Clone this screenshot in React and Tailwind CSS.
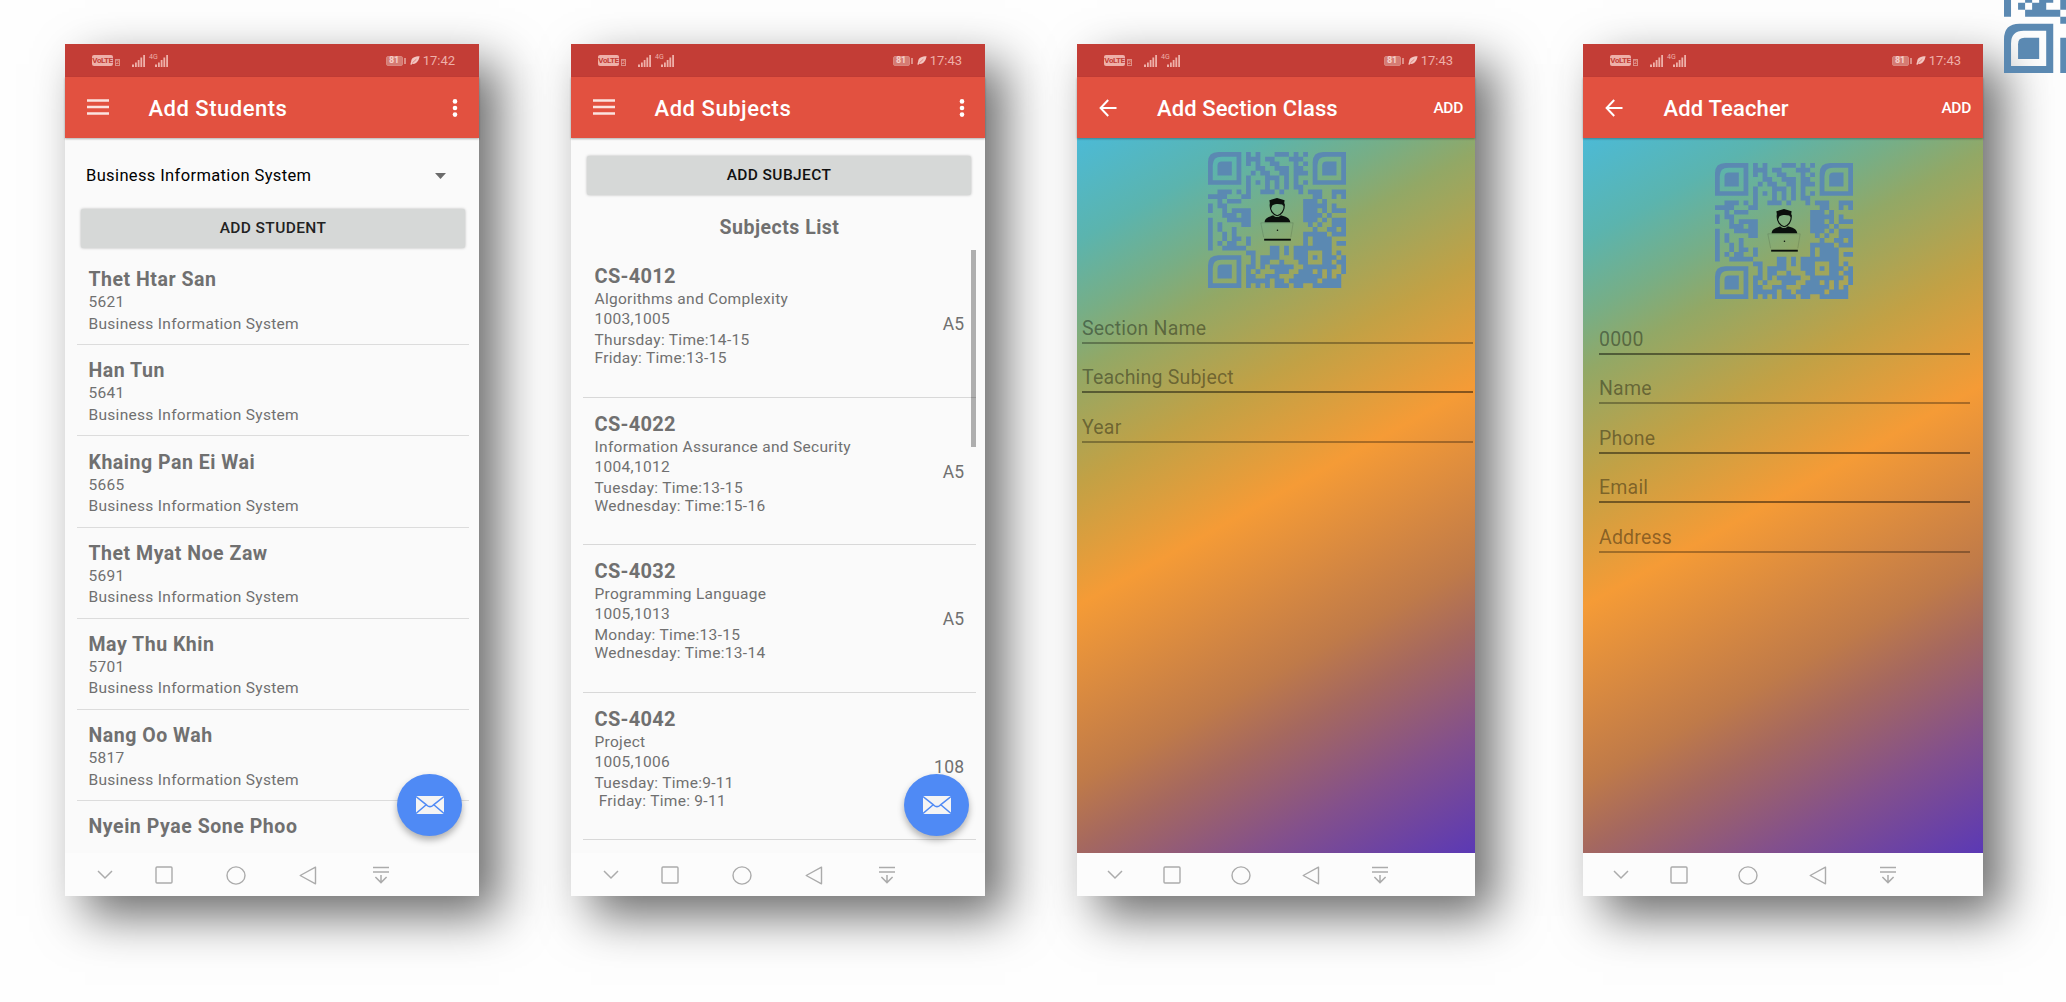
import React from "react";

/* Dark modules of each code row, as column numbers and ranges (finders are drawn apart). */
const MODULES = [
  "8 10 14-16 18 20",
  "8-10 12-13 17-19",
  "8 10 13-14 18 20",
  "10 11 14-16 18-19",
  "9 11-12 15-16 18-20",
  "8 12-14 16 18",
  "8 10 12 14 16 18 20",
  "8 12 14 16 18-19",
  "2-4 6 8 11-13 15 19 21-23 26-28",
  "0-3 7-8 22-23 26 28",
  "2 4-6 20-22 24",
  "0 2-3 20-24 26",
  "0 3 5-8 20-22 24 26-28",
  "3-5 7-8 20-23 25",
  "0 4-8 20-22 24 26-28",
  "0 2 7-8 21 23 26-28",
  "0 2 5 22 25-26 28",
  "0 3 5 20-24 26-28",
  "0 3 5-6 8 20 22-25",
  "0 2 4-5 8 20 22-25 27-28",
  "0 3-7 13-14 16 18-25",
  "8-9 13-14 16 18-20 24-25 27",
  "9 11-14 18-20 22 24-26 28",
  "9 11-12 15 19-20 24-25 27-28",
  "8-9 11 13-17 20-26 28",
  "8 10 14-16 19-21 23 25 28",
  "8-9 12-14 18-23 25 27",
  "8-12 14-15 17-22 24-27",
  "8 10 12 14-16 18-19 22-27",
];

const MODULE_PATH = MODULES.map((row, y) =>
  row
    .split(" ")
    .map((run) => {
      const [a, b = a] = run.split("-").map(Number);
      const w = b - a + 1;
      return `M${a} ${y}h${w}v1h${-w}z`;
    })
    .join("")
).join("");

function Finder({ x, y }) {
  return (
    <g transform={`translate(${x} ${y})`}>
      <path fillRule="evenodd" d="M2.2 0H7V7H0V2.2Q0 0 2.2 0ZM2.8 1Q1 1 1 2.8V6H6V1Z" />
      <path d="M2.9 2H5V5H2V2.9Q2 2 2.9 2Z" />
    </g>
  );
}

function QrCode({ className, person }) {
  return (
    <svg viewBox="0 0 29 29" preserveAspectRatio="none" className={className} fill="#5b89b2">
      <path d={MODULE_PATH} />
      <Finder x={0} y={0} />
      <Finder x={22} y={0} />
      <Finder x={0} y={22} />
      {person && (
        <g>
          <path fill="#0a0f0c" d="M12.9 10.3L14.5 9.8L16.1 10.3L15.9 11.6L15.6 11.2C14.8 11 14.2 11 13.5 11.4L13.2 12.2Z" />
          <path fill="#0a0f0c" d="M11.9 15C11.9 14 13 13.8 13.7 13.5C14 14 15 14 15.3 13.5C16.2 13.8 17.2 14 17.3 15Z" />
          <path fill="none" stroke="#0a0f0c" strokeWidth=".24" d="M13.1 11C12.9 12.6 13.8 13.4 14.55 13.6C15.3 13.4 16.2 12.6 16 11" />
          <path fill="none" stroke="#0a0f0c" strokeOpacity=".35" strokeWidth=".08" d="M11.7 18.2L11.1 15.1H17.9L17.4 18.2" />
          <circle cx="14.6" cy="16.7" r=".16" fill="#0a0f0c" />
          <path fill="#0a0f0c" d="M11.8 18.5H17.4V18.9H11.8Z" />
        </g>
      )}
    </svg>
  );
}

function Signal() {
  return (
    <svg viewBox="0 0 14 12" className="h-3 w-3.5" fill="#eeb0a9">
      <path d="M0 9.5h2v2.5H0zM3 7.5h1.8V12H3zM5.7 5h1.8v7H5.7zM8.4 2.5h1.8V12H8.4zM11.2 0H13v12h-1.8z" />
    </svg>
  );
}

function StatusBar({ time, right }) {
  return (
    <div className="flex h-[33px] shrink-0 items-center bg-[#c33d36] pl-[27px] text-[#eeb0a9]">
      <span className="flex h-[11px] w-[21px] items-center justify-center rounded-[2px] bg-[#eeb0a9] text-[8px] font-bold leading-none tracking-[-0.4px] text-[#c33d36]">
        VoLTE
      </span>
      <span className="ml-[2px] mt-[3px] flex h-[7px] w-[5px] items-center justify-center border border-[#dd8f87] text-[6px] leading-none">
        2
      </span>
      <span className="ml-[12px]">
        <Signal />
      </span>
      <span className="-mr-[3px] ml-[3px] self-start pt-[10px] text-[7px] leading-none">4G</span>
      <Signal />
      <div className={"ml-auto flex items-center " + right}>
        <span className="flex h-[10px] w-[17px] items-center justify-center rounded-[2px] border border-[#d9867e] bg-[#d57b73] text-[9px] font-bold leading-none text-[#f6d0cb]">
          81
        </span>
        <span className="ml-px h-[6px] w-[2px] bg-[#dd8f87]" />
        <svg viewBox="0 0 10 9" className="ml-[4px] h-[9px] w-[10px]">
          <path fill="#f3c5c0" d="M9.6.2C5 .2 1.4 1.6 1.2 5.2L.3 8.4L1.6 8.8L2.2 7.8C6.4 8.6 8.8 4.6 9.6.2Z" />
          <path stroke="#c33d36" strokeWidth=".5" fill="none" d="M2.4 6.8L6.4 3.2" />
        </svg>
        <span className="ml-[3px] text-[13px] leading-none">{time}</span>
      </div>
    </div>
  );
}

function AppBar({ title, back, titleClass, rightClass }) {
  return (
    <div className="relative z-10 flex h-[61px] shrink-0 items-center bg-[#e25140] pt-px text-white shadow-[0_1px_2px_rgba(0,0,0,0.3)]">
      {back ? (
        <svg viewBox="0 0 18 18" className="ml-[22px] h-[18px] w-[18px]" fill="none" stroke="white" strokeWidth="2">
          <path d="M17.5 9H2M9.2 1L1.6 9L9.2 17" />
        </svg>
      ) : (
        <svg viewBox="0 0 22 16" className="mb-[2px] ml-[21.5px] h-4 w-[22px]" fill="#fbe3e0">
          <path d="M0 .3h22v2.5H0zM0 6.8h22v2.5H0zM0 13.2h22v2.5H0z" />
        </svg>
      )}
      <h1 className={"pt-[2px] text-[22px] font-medium leading-none " + titleClass}>{title}</h1>
      <div className={"ml-auto " + rightClass}>
        {back ? (
          <span className="text-[15.5px] font-medium leading-none tracking-[-0.3px]">ADD</span>
        ) : (
          <svg viewBox="0 0 6 18" className="mb-px h-[18px] w-[6px]" fill="white">
            <circle cx="3" cy="2.4" r="2.3" />
            <circle cx="3" cy="9" r="2.3" />
            <circle cx="3" cy="15.6" r="2.3" />
          </svg>
        )}
      </div>
    </div>
  );
}

function NavBar() {
  return (
    <div className="grid h-[43px] shrink-0 grid-cols-[79fr_40fr_104fr_40fr_105fr_46fr] items-center justify-items-center bg-[#fcfcfc] pt-px">
      <svg viewBox="0 0 16 10" className="h-[10px] w-4" fill="none" stroke="#ababab" strokeWidth="1.5">
        <path d="M1 1L8 8L15 1" />
      </svg>
      <svg viewBox="0 0 18 18" className="h-[18px] w-[18px]" fill="none" stroke="#ababab" strokeWidth="1.4">
        <rect x="1" y="1" width="16" height="16" rx="1" />
      </svg>
      <svg viewBox="0 0 20 19" className="h-[19px] w-5" fill="none" stroke="#ababab" strokeWidth="1.4">
        <ellipse cx="10" cy="9.5" rx="9" ry="8.6" />
      </svg>
      <svg viewBox="0 0 18 19" className="h-[19px] w-[18px]" fill="none" stroke="#ababab" strokeWidth="1.4">
        <path strokeLinejoin="round" d="M1.2 9.5L16.5 1.2V17.8Z" />
      </svg>
      <svg viewBox="0 0 16 18" className="h-[18px] w-4" fill="none" stroke="#ababab" strokeWidth="1.5">
        <path d="M0 1.5H16M0 6H16M8 9V16.4M2.4 11L8 16.6L13.6 11" />
      </svg>
    </div>
  );
}

function Phone({ width, gap, time, title, back, titleClass, rightClass, timeClass, children }) {
  return (
    <section
      className={
        "relative flex h-[852px] shrink-0 flex-col shadow-[20px_20px_46px_rgba(0,0,0,0.58)] " + width + " " + gap
      }
    >
      <StatusBar time={time} right={timeClass} />
      <AppBar title={title} back={back} titleClass={titleClass} rightClass={rightClass} />
      {children}
      <NavBar />
    </section>
  );
}

function MailButton({ className }) {
  return (
    <div
      className={
        "absolute top-[730px] flex h-[62px] w-[65px] items-center justify-center rounded-[50%] bg-[#4f8af5] shadow-[0_4px_7px_rgba(0,0,0,0.3)] " +
        className
      }
    >
      <svg viewBox="0 0 28 18" className="h-[18px] w-7">
        <rect width="28" height="18" rx="1" fill="#f4f4f4" />
        <path d="M0 .6L10.8 9.2Q14 12 17.2 9.2L28 .6M0 17.4L10.2 8.8M28 17.4L17.8 8.8" fill="none" stroke="#4f8af5" strokeWidth="1.5" />
      </svg>
    </div>
  );
}

function GreyButton({ children, className }) {
  return (
    <button
      className={
        "flex h-[39px] w-[384px] items-center justify-center rounded-[2px] bg-[#d6d8d7] pt-px text-[15.5px] font-medium tracking-[0.38px] shadow-[0_0_3px_rgba(0,0,0,0.28)] " +
        className
      }
    >
      {children}
    </button>
  );
}

const students = [
  ["Thet Htar San", "5621"],
  ["Han Tun", "5641"],
  ["Khaing Pan Ei Wai", "5665"],
  ["Thet Myat Noe Zaw", "5691"],
  ["May Thu Khin", "5701"],
  ["Nang Oo Wah", "5817"],
];

const subjects = [
  ["CS-4012", "Algorithms and Complexity", "1003,1005", "Thursday: Time:14-15\nFriday: Time:13-15", "A5"],
  ["CS-4022", "Information Assurance and Security", "1004,1012", "Tuesday: Time:13-15\nWednesday: Time:15-16", "A5"],
  ["CS-4032", "Programming Language", "1005,1013", "Monday: Time:13-15\nWednesday: Time:13-14", "A5"],
  ["CS-4042", "Project", "1005,1006", "Tuesday: Time:9-11\n Friday: Time: 9-11", "108"],
];

function Field({ children, dark }) {
  return (
    <div
      className={
        "h-[49.6px] border-b-2 pt-[20.5px] text-[19.5px] leading-[28px] tracking-[0.2px] text-black/40 " +
        (dark ? "border-black/45" : "border-black/30")
      }
    >
      {children}
    </div>
  );
}

const GRADIENT =
  "flex min-h-0 flex-1 flex-col bg-[linear-gradient(151deg,#4cbad6_0%,#5bb4ae_11%,#77ae86_19%,#92a866_25%,#c2a145_37%,#f59b36_50%,#bf7a49_69%,#a5685f_76%,#83508c_87%,#5b39b5_100%)]";

export default function App() {
  return (
    <main className="relative flex h-[1002px] w-[2066px] items-start overflow-hidden bg-[#fefefe] pl-[65px] pt-11 font-['Roboto',sans-serif]">
      <Phone
        width="w-[414px]"
        gap=""
        time="17:42"
        timeClass="pr-[24px]"
        title="Add Students"
        titleClass="ml-[40px] tracking-[0.5px]"
        rightClass="pr-[21px]"
      >
        <div className="min-h-0 flex-1 overflow-hidden bg-[#fafafa]">
          <div className="flex h-[71px] items-center justify-between pl-[21px] pr-[33px] pt-[5px] text-[16.5px] tracking-[0.37px] text-black">
            <span>Business Information System</span>
            <svg viewBox="0 0 11 6" className="h-[6px] w-[11px]" fill="#6b6b6b">
              <path d="M0 0H11L5.5 6Z" />
            </svg>
          </div>
          <GreyButton className="ml-4 text-[#222]">ADD STUDENT</GreyButton>
          <ul className="ml-3 mr-[10px] mt-[6px] text-[#707070]">
            {students.map(([name, id]) => (
              <li
                key={id}
                className="h-[91.2px] border-b-[1.5px] border-[#dcdcdc] pl-[11.5px] pt-[14.2px] text-[15.5px] leading-[21.5px] tracking-[0.3px]"
              >
                <p className="text-[19.5px] font-bold leading-6 tracking-[0.52px]">{name}</p>
                <p>{id}</p>
                <p>Business Information System</p>
              </li>
            ))}
            <li className="pl-[11.5px] pt-[14.2px]">
              <p className="text-[19.5px] font-bold leading-6 tracking-[0.55px]">Nyein Pyae Sone Phoo</p>
            </li>
          </ul>
        </div>
        <MailButton className="left-[332px]" />
      </Phone>

      <Phone
        width="w-[414px]"
        gap="ml-[92px]"
        time="17:43"
        timeClass="pr-[23px]"
        title="Add Subjects"
        titleClass="ml-[40px] tracking-[0.55px]"
        rightClass="pr-5"
      >
        <div className="relative min-h-0 flex-1 overflow-hidden bg-[#fafafa] pt-[18px]">
          <GreyButton className="ml-4 text-[#111]">ADD SUBJECT</GreyButton>
          <h2 className="h-[55px] pl-[3px] pt-[11px] text-center text-[19.5px] font-bold leading-[44px] tracking-[0.5px] text-[#707070]">
            Subjects List
          </h2>
          <ul className="ml-3 mr-[9px] text-[#707070]">
            {subjects.map(([code, name, ids, times, room]) => (
              <li
                key={code}
                className="flex h-[147.6px] items-center justify-between border-b-[1.5px] border-[#d8d8d8] pl-[11.5px] pr-[11.5px]"
              >
                <div className="self-start pt-[14px] text-[15.5px] leading-5 tracking-[0.3px]">
                  <p className="text-[20px] font-bold leading-[25.3px]">{code}</p>
                  <p>{name}</p>
                  <p className="leading-[21px]">{ids}</p>
                  <p className="mt-px whitespace-pre leading-[18px]">{times}</p>
                </div>
                <span className="pt-[2px] text-[17.5px] tracking-[0.3px]">{room}</span>
              </li>
            ))}
          </ul>
          <div className="absolute left-[400px] top-[112px] h-[197px] w-[5px] bg-black/30" />
        </div>
        <MailButton className="left-[333px]" />
      </Phone>

      <Phone
        width="w-[398px]"
        gap="ml-[92px]"
        time="17:43"
        timeClass="pr-[22px]"
        title="Add Section Class"
        titleClass="ml-[40px] tracking-[0.1px]"
        rightClass="pr-[12px]"
        back
      >
        <div className={GRADIENT}>
          <QrCode person className="ml-[131px] mt-[14px] h-[136px] w-[138px] shrink-0" />
          <div className="ml-[5px] mr-[2px] mt-[6px]">
            <Field>Section Name</Field>
            <Field dark>Teaching Subject</Field>
            <Field>Year</Field>
          </div>
        </div>
      </Phone>

      <Phone
        width="w-[400px]"
        gap="ml-[108px]"
        time="17:43"
        timeClass="pr-[22px]"
        title="Add Teacher"
        titleClass="ml-[40.5px] tracking-[0.15px]"
        rightClass="pr-[12px]"
        back
      >
        <div className={GRADIENT}>
          <QrCode person className="ml-[132px] mt-[25px] h-[136px] w-[138px] shrink-0" />
          <div className="ml-[16px] mr-[13px] mt-[6px]">
            <Field dark>0000</Field>
            <Field>Name</Field>
            <Field dark>Phone</Field>
            <Field dark>Email</Field>
            <Field>Address</Field>
          </div>
        </div>
      </Phone>

      <QrCode className="absolute left-[2004px] top-[-131.5px] h-[204px] w-[204px]" />
    </main>
  );
}
